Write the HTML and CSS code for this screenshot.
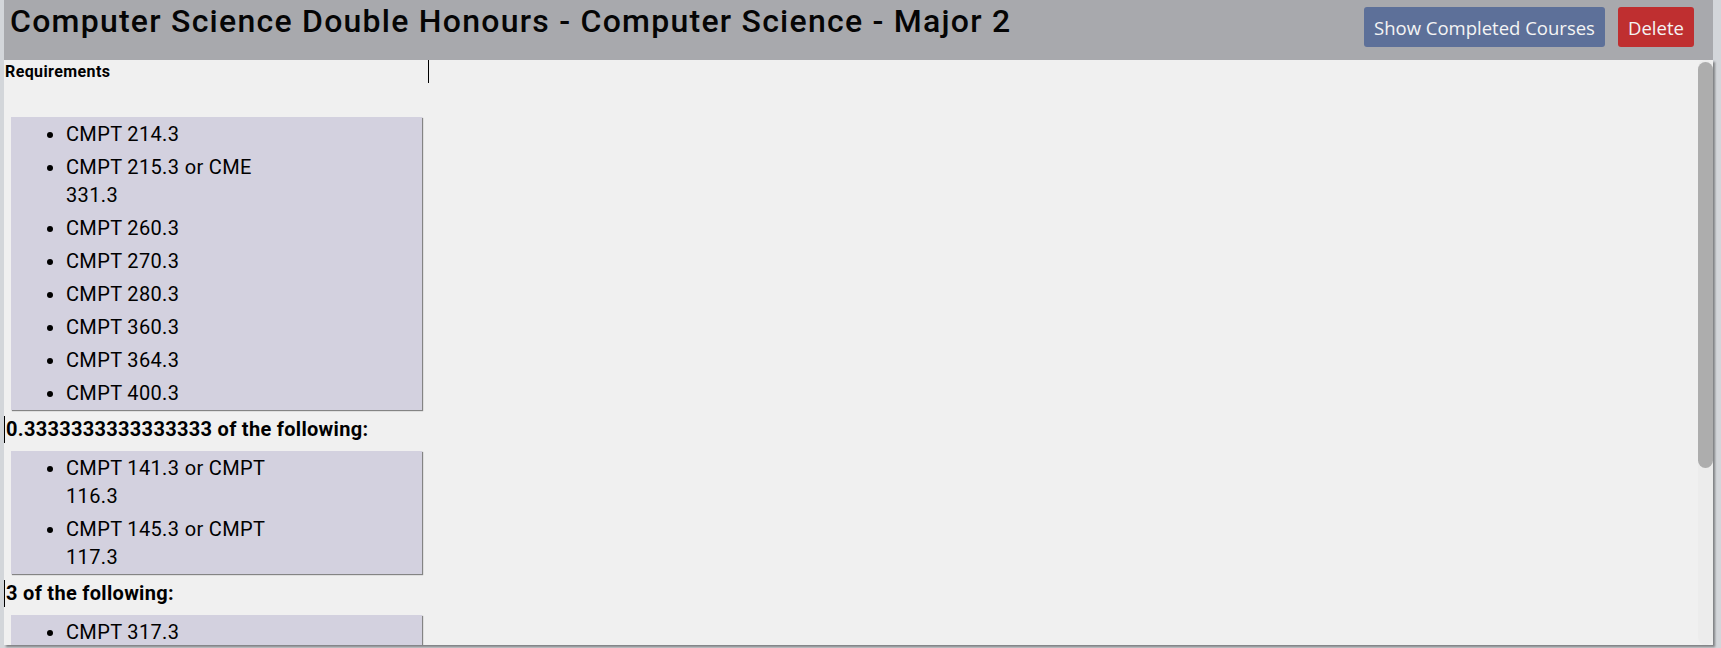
FILE: index.html
```html
<!DOCTYPE html>
<html lang="en">
<head>
<meta charset="utf-8">
<title>Computer Science Double Honours - Computer Science - Major 2</title>
<link rel="stylesheet" href="styles.css">
</head>
<body>
<div class="app">
  <header class="topbar">
    <h1 class="title">Computer Science Double Honours - Computer Science - Major 2</h1>
    <div class="actions">
      <button class="btn btn-blue">Show Completed Courses</button>
      <button class="btn btn-red">Delete</button>
    </div>
  </header>
  <main class="content">
    <div class="req-head">Requirements</div>
    <div class="group group-first">
      <ul class="box">
        <li>CMPT 214.3</li>
        <li>CMPT 215.3 or CME 331.3</li>
        <li>CMPT 260.3</li>
        <li>CMPT 270.3</li>
        <li>CMPT 280.3</li>
        <li>CMPT 360.3</li>
        <li>CMPT 364.3</li>
        <li>CMPT 400.3</li>
      </ul>
    </div>
    <div class="group">
      <div class="group-head">0.3333333333333333 of the following:</div>
      <ul class="box">
        <li>CMPT 141.3 or CMPT 116.3</li>
        <li>CMPT 145.3 or CMPT 117.3</li>
      </ul>
    </div>
    <div class="group">
      <div class="group-head">3 of the following:</div>
      <ul class="box">
        <li>CMPT 317.3</li>
        <li>CMPT 332.3</li>
        <li>CMPT 340.3</li>
        <li>CMPT 350.3</li>
        <li>CMPT 353.3</li>
        <li>CMPT 370.3</li>
        <li>CMPT 371.3</li>
        <li>CMPT 381.3</li>
      </ul>
    </div>
    <div class="scrollbar" aria-hidden="true"><div class="thumb"></div></div>
  </main>
</div>
</body>
</html>
```

FILE: styles.css
```css
html, body {
  margin: 0;
  padding: 0;
  height: 648px;
  overflow: hidden;
}
body {
  background: #d3d6da;
  font-family: Roboto, "Liberation Sans", Arial, sans-serif;
  color: #000;
}
.app {
  margin-left: 4px;
  width: 1709px;
}
.topbar {
  height: 60px;
  background: #a8a9ad;
  display: flex;
  align-items: flex-start;
}
.title {
  margin: 3px 0 0 0;
  padding-left: 6px;
  font-size: 32px;
  font-weight: 500;
  letter-spacing: 1.25px;
  line-height: 37px;
  white-space: nowrap;
  color: #050505;
}
.actions {
  margin-left: auto;
  margin-top: 7px;
  padding-right: 19px;
  display: flex;
  gap: 13px;
}
.btn {
  height: 40px;
  border: none;
  border-radius: 3px;
  color: #f4f4f4;
  font-family: "Open Sans", "DejaVu Sans", sans-serif;
  font-size: 18.5px;
  font-weight: 400;
  padding: 0;
  display: flex;
  align-items: center;
  justify-content: center;
}
.btn-blue {
  width: 241px;
  background: #5d7099;
}
.btn-red {
  width: 76px;
  background: #bf2f30;
}
.content {
  position: relative;
  height: 585px;
  background: #f0f0f0;
  overflow: hidden;
  box-shadow: 2px 2px 2px rgba(0, 0, 0, 0.4);
}
.scrollbar {
  position: absolute;
  top: 0;
  right: 0;
  bottom: 0;
  width: 15px;
  background: #ececec;
  border-radius: 8px;
}
.thumb {
  margin-top: 2px;
  height: 406px;
  background: #adadad;
  border-radius: 8px;
}
.req-head {
  width: 423px;
  height: 23px;
  line-height: 23px;
  border-right: 1px solid #000;
  font-size: 16px;
  font-weight: 700;
  letter-spacing: 0.4px;
  padding-left: 1px;
}
.group-first .box {
  margin-top: 34px;
}
.group-head {
  margin-top: 6px;
  border-left: 1px solid #000;
  font-size: 20px;
  font-weight: 700;
  letter-spacing: 0.3px;
  line-height: 27px;
  padding-left: 1px;
}
.box {
  margin: 8px 0 0 7px;
  width: 411px;
  background: #d3d1df;
  box-shadow: 1px 1px 1px rgba(0, 0, 0, 0.45);
  list-style: disc;
  padding: 3px 0 3px 55px;
  box-sizing: border-box;
}
.box li {
  width: 220px;
  font-size: 20px;
  letter-spacing: 0.35px;
  line-height: 28px;
}
.box li + li {
  margin-top: 5px;
}
```
